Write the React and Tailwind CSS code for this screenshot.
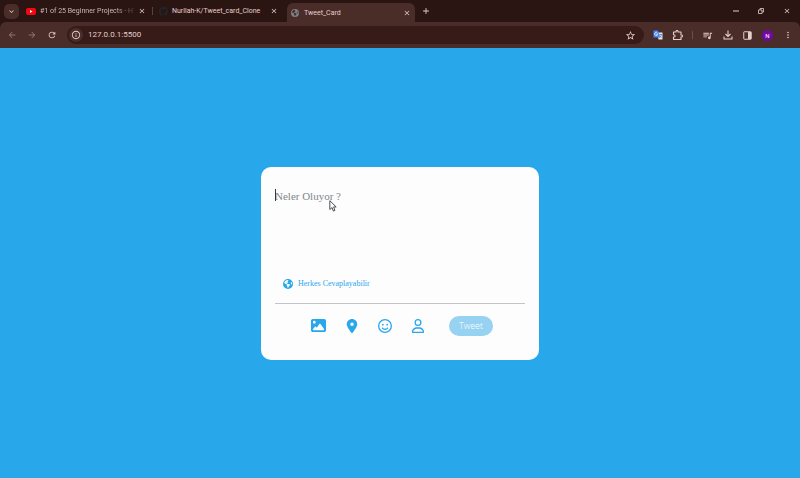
import { FaImage, FaLocationDot, FaRegFaceSmile, FaRegUser, FaEarthAmericas } from 'react-icons/fa6';
import {
  MdArrowBack, MdArrowForward, MdRefresh, MdInfoOutline, MdStarOutline,
  MdQueueMusic, MdMoreVert, MdClose, MdAdd, MdExpandMore,
} from 'react-icons/md';

function YoutubeIcon() {
  return (
    <svg viewBox="0 0 20 14" className="h-[7px] w-[10px] shrink-0">
      <rect width="20" height="14" rx="4" fill="#f40612" />
      <path d="M8 4v6l5-3z" fill="#fff" />
    </svg>
  );
}

function GithubIcon() {
  return (
    <svg viewBox="0 0 16 16" className="size-[9px] shrink-0" fill="#1b2a30">
      <path d="M8 0a8 8 0 0 0-2.500 15.600c.4 0 .5-.2.500-.4v-1.500c-2.200.5-2.700-1-2.700-1-.4-.9-.9-1.200-.9-1.200-.7-.5.1-.5.1-.5.8.1 1.200.8 1.200.8.7 1.300 1.900.9 2.300.7.1-.5.3-.9.5-1.100-1.800-.2-3.600-.9-3.600-4 0-.9.3-1.600.8-2.100-.1-.2-.4-1 .1-2.100 0 0 .7-.2 2.200.8a7.500 7.500 0 0 1 4 0c1.500-1 2.200-.8 2.200-.8.4 1.100.2 1.900.1 2.100.5.6.8 1.300.8 2.100 0 3.100-1.900 3.700-3.700 3.900.3.3.6.8.6 1.500v2.200c0 .2.100.5.600.4A8 8 0 0 0 8 0z" />
    </svg>
  );
}

function TranslateIcon() {
  return (
    <svg viewBox="0 0 20 20" className="size-[10px]">
      <path d="M8 5h11v14h-8z" fill="#dfe3ea" />
      <path d="M12 9h6M15 8v1M17 9c-.5 3-2 5-4 6M13 11c1 2 2 3 4 4" stroke="#5f7fae" strokeWidth="1.500" fill="none" />
      <path d="M1 1h9l4 14H1z" fill="#4285f4" />
      <path d="M9 6.500a3 3 0 1 0 .3 2H6.500" stroke="#fff" strokeWidth="1.500" fill="none" />
    </svg>
  );
}

function ExtensionIcon() {
  return (
    <svg viewBox="0 0 22 22" className="size-[11px]" fill="none" stroke="currentColor" strokeWidth="2.200" strokeLinejoin="round">
      <path d="M3 4h5V3a2 2 0 0 1 4 0v1h6v6h1a2 2 0 0 1 0 4h-1v5H3v-5h1a2 2 0 0 0 0-4.500H3z" />
    </svg>
  );
}

function DownloadIcon() {
  return (
    <svg viewBox="0 0 20 20" className="size-[10px]" fill="none" stroke="currentColor" strokeWidth="2.200">
      <path d="M10 1v11M5 8l5 5 5-5M2 13v5h16v-5" />
    </svg>
  );
}

function SidePanelIcon() {
  return (
    <svg viewBox="0 0 18 18" className="size-[9px]">
      <rect x="1.500" y="1.500" width="15" height="15" rx="1" fill="none" stroke="currentColor" strokeWidth="2" />
      <path d="M10 2h6v14h-6z" fill="currentColor" />
    </svg>
  );
}

function MinimizeIcon() {
  return (
    <svg viewBox="0 0 12 12" className="size-[6px]"><path d="M0 6h12" stroke="currentColor" strokeWidth="2" /></svg>
  );
}

function RestoreIcon() {
  return (
    <svg viewBox="0 0 12 12" className="size-[6px]" fill="none" stroke="currentColor" strokeWidth="1.600">
      <path d="M1 4h7v7H1zM4 4V1h7v7H8" />
    </svg>
  );
}

function Tab({ icon, title, fade, className }) {
  return (
    <div className={`flex items-center px-1 ${className}`}>
      {icon}
      <span className={`min-w-0 flex-1 whitespace-nowrap ${fade ? 'bg-linear-to-r from-[#dcc5c1] from-80% to-[#dcc5c1]/20 bg-clip-text text-transparent' : ''}`}>{title}</span>
      <button aria-label={`Close ${title}`} className="shrink-0"><MdClose className="size-2" /></button>
    </div>
  );
}

function Browser() {
  return (
    <header className="bg-[#2b1512] font-[Roboto,sans-serif] text-[7px] leading-3 text-[#e6cfcb]">
      <div className="flex h-[22px] items-stretch">
        <button aria-label="Search tabs" className="mt-1 ml-1 flex size-[15px] items-center justify-center rounded-[5px] bg-[#4a2c29]">
          <MdExpandMore className="size-[9px]" />
        </button>
        <Tab className="ml-[3px] w-[128px] gap-1" fade icon={<YoutubeIcon />} title="#1 of 25 Beginner Projects - HT" />
        <span className="mx-[2px] my-[7px] w-px bg-[#5b403c]" />
        <Tab className="w-[127px] gap-1" icon={<GithubIcon />} title="Nurllah-K/Tweet_card_Clone" />
        <Tab className="mt-[3px] ml-[5px] w-[128px] gap-[5px] rounded-t-md bg-[#4a2c29]" icon={<FaEarthAmericas className="size-2 shrink-0 text-[#7c8184]" />} title="Tweet_Card" />
        <button aria-label="New tab" className="ml-[6px]"><MdAdd className="size-[10px]" /></button>
        <div className="mr-[9px] ml-auto flex items-center gap-[19px]">
          <button aria-label="Minimize"><MinimizeIcon /></button>
          <button aria-label="Restore"><RestoreIcon /></button>
          <button aria-label="Close window"><MdClose className="size-2" /></button>
        </div>
      </div>
      <div className="flex h-[26px] items-center rounded-t-md bg-[#4a2c29] px-[7px]">
        <div className="flex gap-[10px]">
          <button aria-label="Back" className="text-[#94736f]"><MdArrowBack className="size-[10px]" /></button>
          <button aria-label="Forward" className="text-[#94736f]"><MdArrowForward className="size-[10px]" /></button>
          <button aria-label="Reload"><MdRefresh className="size-[10px]" /></button>
        </div>
        <div className="ml-[10px] flex h-[18px] flex-1 items-center rounded-full bg-[#361b18] pr-2 pl-[2px]">
          <span className="flex size-[14px] items-center justify-center rounded-full bg-[#4a2c29]"><MdInfoOutline className="size-[10px]" /></span>
          <input aria-label="Address" defaultValue="127.0.0.1:5500" className="ml-[5px] min-w-0 flex-1 bg-transparent text-[8px] outline-none" />
          <button aria-label="Bookmark"><MdStarOutline className="size-[11px]" /></button>
        </div>
        <div className="ml-[9px] flex items-center gap-[10px]">
          <div className="flex items-center gap-[9px]">
            <button aria-label="Translate"><TranslateIcon /></button>
            <button aria-label="Extensions"><ExtensionIcon /></button>
            <span className="h-2 w-px bg-[#68504c]" />
            <button aria-label="Media"><MdQueueMusic className="size-[11px]" /></button>
          </div>
          <button aria-label="Downloads"><DownloadIcon /></button>
          <button aria-label="Side panel"><SidePanelIcon /></button>
          <button aria-label="Profile" className="size-[11px] rounded-full bg-[#7209a3] text-center text-[6px] leading-[11px] text-white">N</button>
          <button aria-label="Menu"><MdMoreVert className="size-[10px]" /></button>
        </div>
      </div>
    </header>
  );
}

function TweetCard() {
  return (
    <form className="relative w-[278px] rounded-[10px] bg-[#fefdfe] px-[14px] pt-[22px] pb-6 font-['Liberation_Serif',serif] text-[#28a7ea]">
      <textarea
        aria-label="Tweet"
        placeholder="Neler Oluyor ?"
        className="block h-[88px] w-full resize-none bg-transparent text-[11px] leading-[14px] text-black outline-none placeholder:text-[#80878b]"
      />
      <span className="absolute top-[22px] left-[14px] h-3 w-px bg-[#33383c]" />
      <svg viewBox="0 0 12 19" className="absolute top-[33px] left-[68px] h-3 w-2" fill="#fff" stroke="#33383c" strokeWidth="1.400">
        <path d="M1 1v14l3.500-3 2 5.500 2.500-1-2-5.500h4z" />
      </svg>
      <button type="button" className="ml-2 flex items-center gap-[5px] text-[8px] leading-[14px]">
        <FaEarthAmericas className="size-[10px]" />
        Herkes Cevaplayabilir
      </button>
      <hr className="mt-3 border-[#c3c3c8]" />
      <div className="mt-3 flex items-center justify-center gap-6 pl-1">
        <div className="flex gap-[19px]">
          <button type="button" aria-label="Image"><FaImage className="size-[15px]" /></button>
          <button type="button" aria-label="Location"><FaLocationDot className="size-[14px]" /></button>
          <button type="button" aria-label="Emoji"><FaRegFaceSmile className="size-[14px]" /></button>
          <button type="button" aria-label="Person"><FaRegUser className="size-[14px]" /></button>
        </div>
        <button className="h-5 w-11 rounded-full bg-[#98d2f2] font-['Open_Sans',sans-serif] text-[9px] font-light text-white">Tweet</button>
      </div>
    </form>
  );
}

export default function App() {
  return (
    <div className="flex min-h-screen flex-col">
      <Browser />
      <main className="flex flex-1 items-center justify-center bg-[#28a7ea]">
        <TweetCard />
      </main>
    </div>
  );
}
